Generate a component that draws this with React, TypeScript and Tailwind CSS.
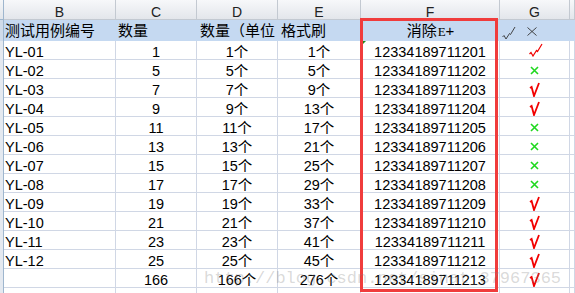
import type { ReactNode } from "react"

type Mark = "thin" | "check" | "cross"

const marks: Mark[] = [
	"thin",
	"cross",
	"check",
	"check",
	"cross",
	"cross",
	"cross",
	"cross",
	"check",
	"check",
	"check",
	"check",
]

const rows = marks.map((mark, i) => {
	const n = 1 + (i === 0 ? 0 : 2 * i + 2)
	return {
		id: `YL-${String(i + 1).padStart(2, "0")}`,
		qty: i === 0 ? 1 : n,
		fmt: 1 + 4 * i,
		code: `123341897112${String(i + 1).padStart(2, "0")}`,
		mark,
	}
})

const GRID = "grid grid-cols-[4px_112px_81px_81px_83px_139px_70px_1fr]"
const FONT = "font-['Liberation_Sans','Noto_Sans_CJK_SC',sans-serif]"
const HEAD = "bg-[#c5d9f1] flex items-end pb-[3px] leading-none text-[15px] whitespace-nowrap overflow-hidden"

function ThinCheck({ color, width = 1.2 }: { color: string; width?: number }) {
	return (
		<svg width="14" height="14" viewBox="0 0 14 14">
			<polyline
				points="0.5,11 2,9.5 4,13 7.5,7.5 8.5,8.5 13,1"
				fill="none"
				stroke={color}
				strokeWidth={width}
			/>
		</svg>
	)
}

function RedCheck() {
	return (
		<svg width="11" height="15" viewBox="0 0 11 15">
			<path d="M1 6 L2.6 5 L5 14 L10 1" fill="none" stroke="#f20000" strokeWidth="1.8" />
		</svg>
	)
}

function GreenCross() {
	return (
		<svg width="9" height="9" viewBox="0 0 9 9">
			<path d="M1 1 L8 8 M8 1 L1 8" fill="none" stroke="#1fd81f" strokeWidth="1.6" />
		</svg>
	)
}

function Thin() {
	return (
		<svg width="10" height="9" viewBox="0 0 10 9">
			<path d="M0.5 0.5 L9.5 8.5 M9.5 0.5 L0.5 8.5" fill="none" stroke="#333" strokeWidth="0.9" />
		</svg>
	)
}

// a plain spreadsheet cell with its gridlines
function Cell({ children, className = "" }: { children?: ReactNode; className?: string }) {
	return (
		<div
			className={`border-r border-b border-[#d0d7e5] flex items-end overflow-hidden whitespace-nowrap leading-none text-[14.5px] text-black ${className}`}>
			{children}
		</div>
	)
}

function MarkCell({ mark }: { mark: Mark }) {
	if (mark === "thin") {
		return (
			<div className="border-r border-b border-[#d0d7e5] flex justify-center items-start pt-[2px] pl-[2px]">
				<ThinCheck color="#f00000" />
			</div>
		)
	}
	if (mark === "cross") {
		return (
			<div className="border-r border-b border-[#d0d7e5] flex justify-center items-start pt-[6px]">
				<GreenCross />
			</div>
		)
	}
	return (
		<div className="border-r border-b border-[#d0d7e5] flex justify-center items-start pt-[3px]">
			<RedCheck />
		</div>
	)
}

function RowHead() {
	return <div className="bg-[#e4e9f0] border-r border-[#9eb6ce]" />
}

export default function App() {
	const letters = ["B", "C", "D", "E", "F", "G", ""]

	return (
		<div className={`relative w-[575px] h-[293px] overflow-hidden bg-white ${FONT}`}>
			{/* column letters */}
			<div className={`${GRID} h-[20px]`}>
				<div className="bg-gradient-to-b from-[#f4f6f8] to-[#e1e5ea] border-r border-b border-[#9eb6ce]" />
				{letters.map((l, i) => (
					<div
						key={i}
						className="bg-gradient-to-b from-[#f7f8fa] to-[#e3e6eb] border-r border-b border-[#c3c9d1] flex items-end justify-center leading-none text-[14px] text-[#222]">
						{l}
					</div>
				))}
			</div>

			{/* header row with fill */}
			<div className={`${GRID} h-[21px]`}>
				<div className="bg-[#cfdbea] border-r border-[#9eb6ce]" />
				<div className={`${HEAD} pl-[1px]`}>测试用例编号</div>
				<div className={`${HEAD} pl-[2px]`}>数量</div>
				<div className={`${HEAD} pl-[3px]`}>数量（单位</div>
				<div className={`${HEAD} pl-[3px]`}>格式刷</div>
				<div className={`${HEAD} justify-center`}>
					消除<span className="font-['Liberation_Serif',serif] text-[13px] ml-[1px]">E</span>+
				</div>
				<div className="bg-[#c5d9f1] flex items-start gap-[11px] pl-[2px] pt-[6px]">
					<ThinCheck color="#333" width={0.9} />
					<div className="pt-[1px]">
						<Thin />
					</div>
				</div>
				<div className="bg-[#c5d9f1]" />
			</div>

			{rows.map((r, i) => (
				<div key={r.id} className={`${GRID} h-[19px]`}>
					<RowHead />
					<Cell className="pl-[1px]">{r.id}</Cell>
					<Cell className="justify-center">{r.qty}</Cell>
					<Cell className="justify-center">{r.qty}个</Cell>
					<Cell className="justify-center">{r.fmt}个</Cell>
					<Cell className="justify-center relative">
						{i === 0 && (
							<div className="absolute left-0 top-0 w-0 h-0 border-t-[5px] border-r-[5px] border-t-[#1e8a1e] border-r-transparent" />
						)}
						{r.code}
					</Cell>
					<MarkCell mark={r.mark} />
					<Cell />
				</div>
			))}

			{/* total row */}
			<div className={`${GRID} h-[19px]`}>
				<RowHead />
				<Cell />
				<Cell className="justify-center">166</Cell>
				<Cell className="justify-center">166个</Cell>
				<Cell className="justify-center">276个</Cell>
				<Cell className="justify-center">12334189711213</Cell>
				<MarkCell mark="check" />
				<Cell />
			</div>

			<div className={`${GRID} h-[19px]`}>
				<RowHead />
				<Cell />
				<Cell />
				<Cell />
				<Cell />
				<Cell />
				<Cell />
				<Cell />
			</div>

			{/* red highlight box round column F */}
			<div className="absolute left-[360px] top-[18px] w-[138px] h-[274px] border-[3px] border-[#f03c3c] pointer-events-none" />

			{/* blog watermark */}
			<div className="absolute left-[204px] top-[270px] font-['Liberation_Mono',monospace] text-[17px] leading-none whitespace-nowrap text-[rgba(130,130,130,0.3)] pointer-events-none">
				http://blog.csdn.net/sinat_37967365
			</div>
		</div>
	)
}
